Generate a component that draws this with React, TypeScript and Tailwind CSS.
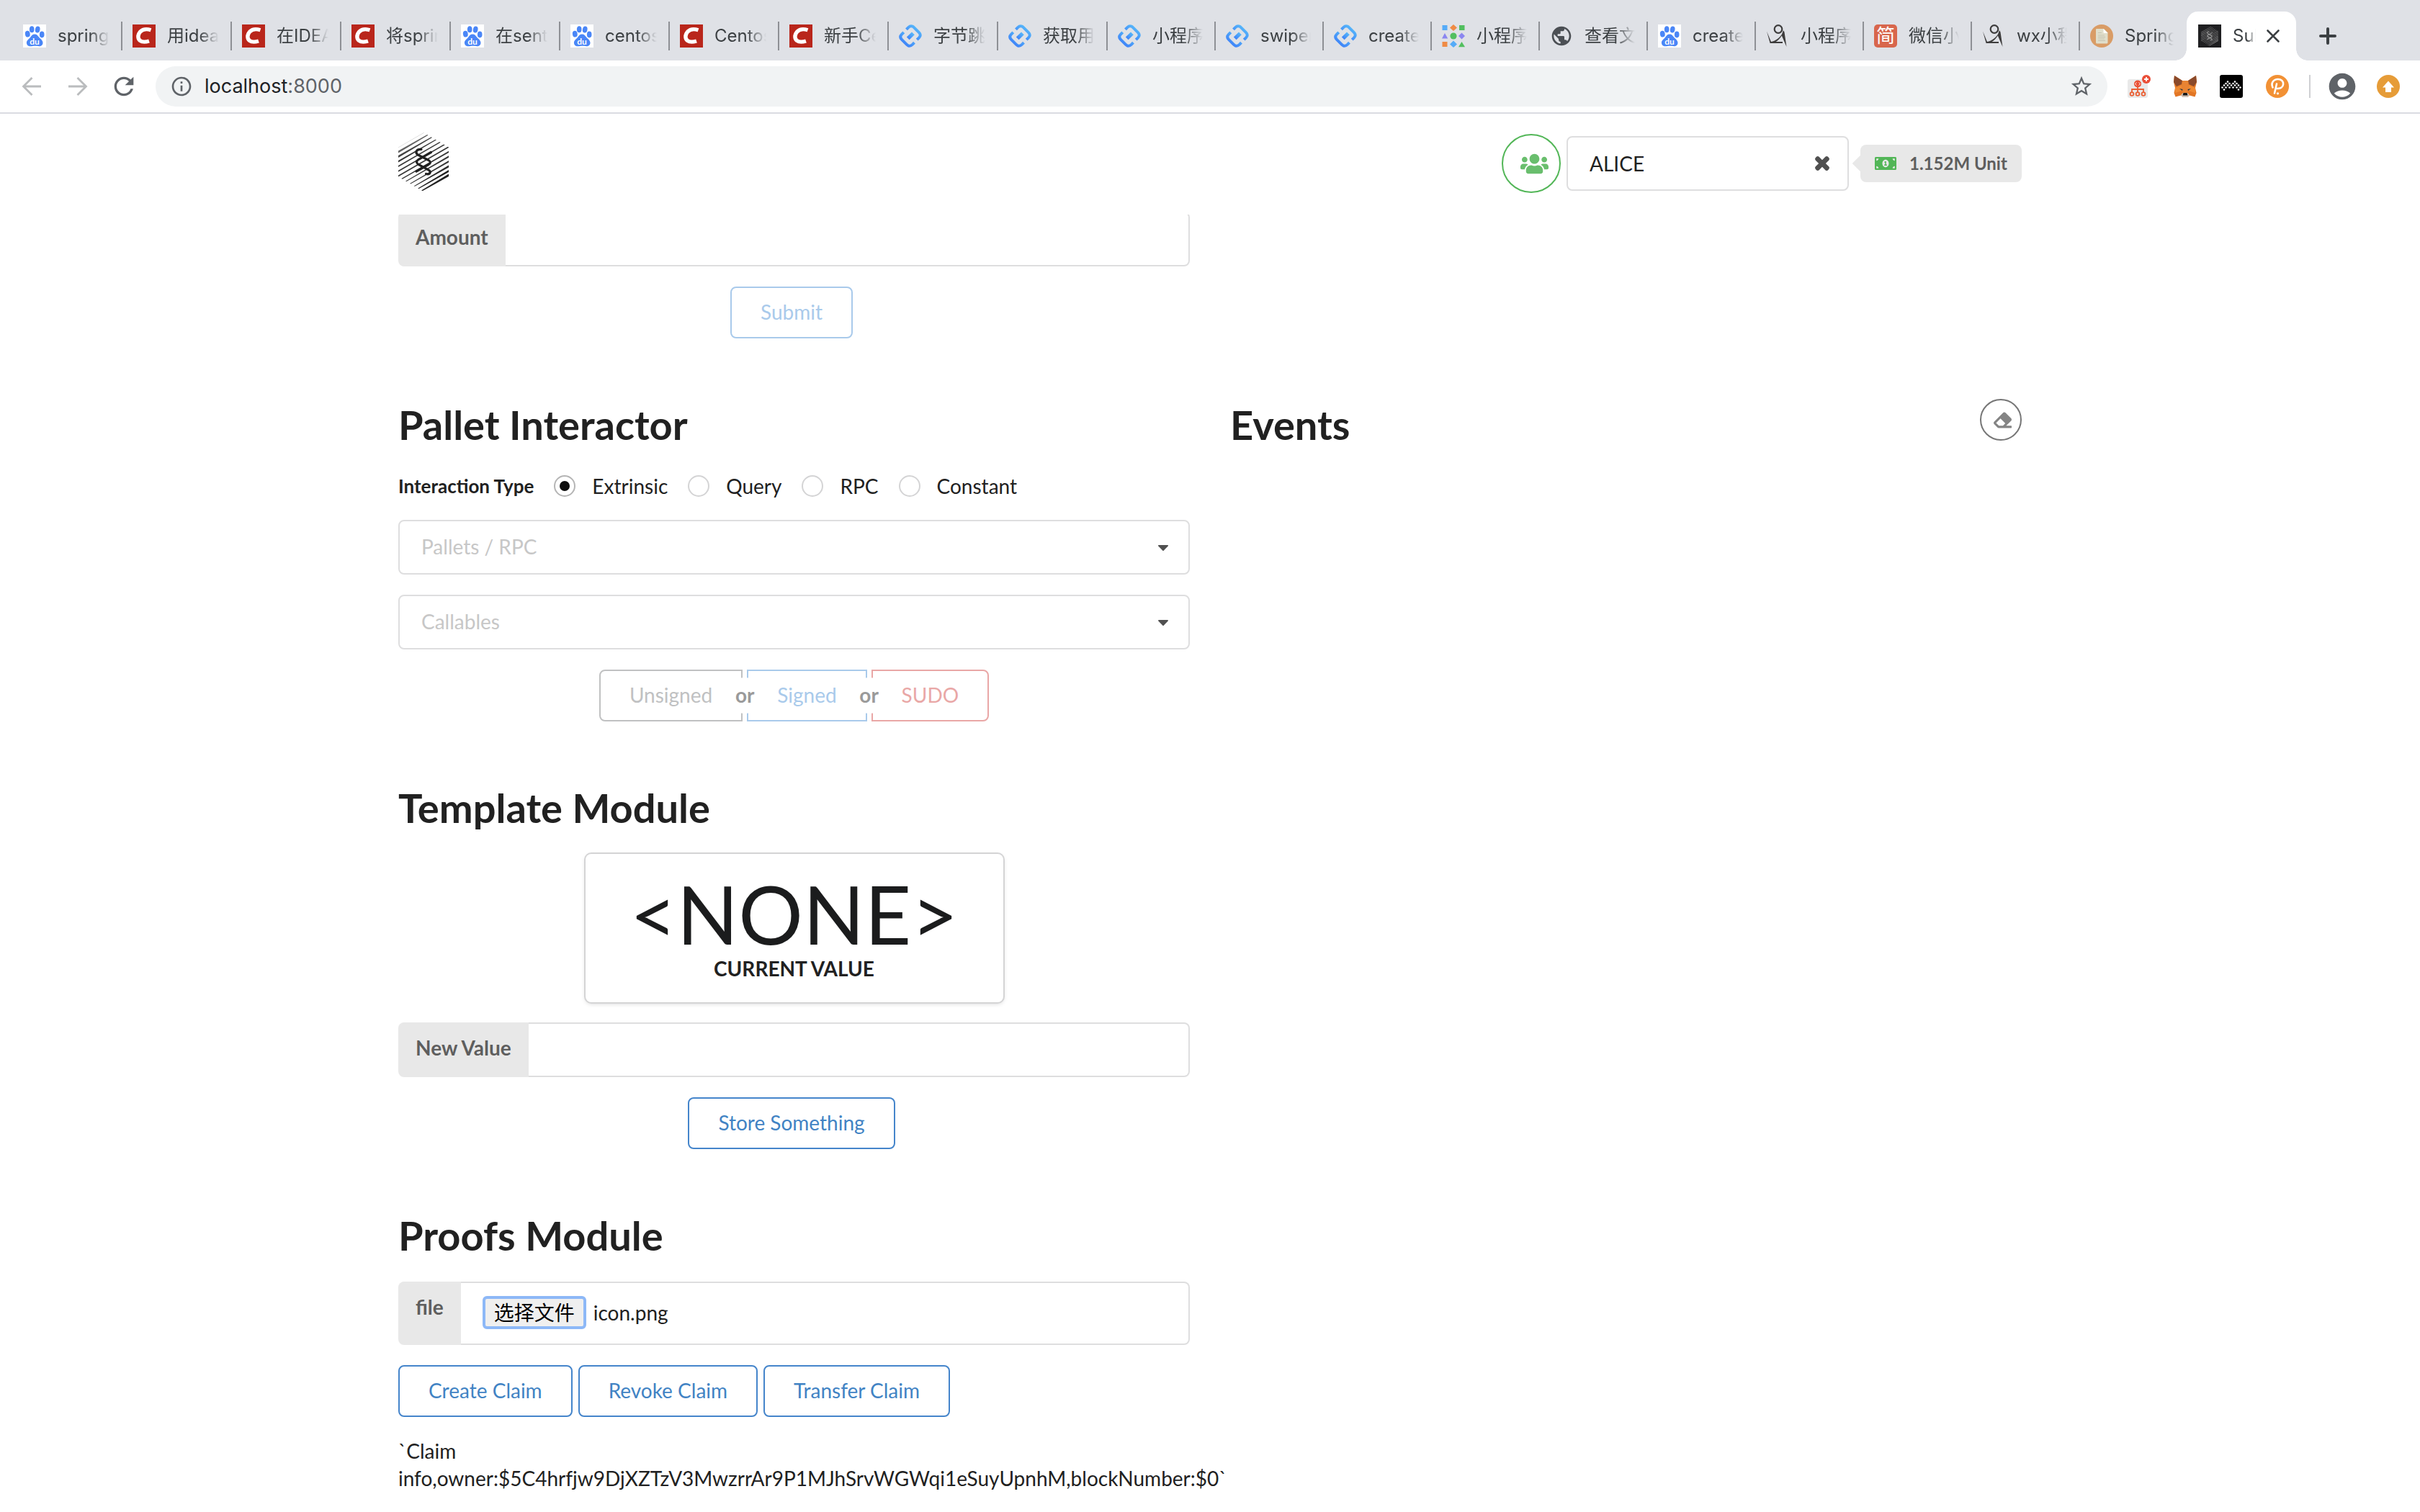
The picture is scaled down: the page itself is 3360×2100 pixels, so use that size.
import type { ReactNode } from "react";
import {
  FaCaretDown,
  FaEraser,
  FaMoneyBillAlt,
  FaTimes,
  FaUsers,
} from "react-icons/fa";
import {
  MdAccountCircle,
  MdInfoOutline,
  MdPublic,
  MdRefresh,
  MdStarBorder,
} from "react-icons/md";

/* ---------- favicons ---------- */

function BaiduIcon() {
  return (
    <svg viewBox="0 0 32 32" className="size-8 shrink-0">
      <rect width="32" height="32" fill="#fff" />
      <g fill="#4a86f7">
        <ellipse cx="6.3" cy="13.2" rx="3.4" ry="4.4" transform="rotate(-8 6.3 13.2)" />
        <ellipse cx="12.2" cy="6.8" rx="3.3" ry="4.5" />
        <ellipse cx="20.2" cy="7" rx="3.3" ry="4.5" transform="rotate(10 20.2 7)" />
        <ellipse cx="26.2" cy="14" rx="3.3" ry="4.4" />
        <path d="M16.2 13.6c3 0 4.200 2.200 6 4.200 2.200 2.400 5.300 4.400 5.300 7.600 0 3-2.200 4.800-5.100 4.800-2.300 0-3.700-.4-6-.4s-4 .5-6.300.5c-3 0-5.200-2-5.200-5 0-3.200 3-5 5-7.400 1.800-2.200 3.300-4.300 6.300-4.300z" />
      </g>
      <text x="16" y="28" textAnchor="middle" fontFamily="Lato, sans-serif" fontWeight="700" fontSize="12" fill="#fff">
        du
      </text>
    </svg>
  );
}

function CIcon() {
  return (
    <svg viewBox="0 0 32 32" className="size-8 shrink-0">
      <rect width="32" height="32" fill="#b9261b" />
      <path
        d="M25.500 7.800C20 6 14 6.600 10.600 10.200c-3.600 4-3.600 9.600-.2 12.200 3 2.200 8.200 2 12.600.6"
        fill="none"
        stroke="#fff"
        strokeWidth="5.4"
      />
    </svg>
  );
}

function LinkIcon() {
  return (
    <svg viewBox="0 0 32 32" className="size-8 shrink-0">
      <defs>
        <linearGradient id="tt" x1="1" y1="0" x2="0.200" y2="1">
          <stop offset="0" stopColor="#5cc4fa" />
          <stop offset="1" stopColor="#3b7cf8" />
        </linearGradient>
      </defs>
      <g fill="none" stroke="url(#tt)" strokeWidth="4">
        <path d="M10.500 6.800l2.700-2.700q2.800-2.600 5.800-1.400 1 .4 2 1.400l7 7q3.600 3.600 0 7.200l-2.800 2.800" />
        <path d="M21.500 25.200l-2.700 2.700q-2.800 2.600-5.800 1.400-1-.4-2-1.400l-7-7q-3.600-3.600 0-7.200l2.800-2.800" />
      </g>
      <path d="M10.800 17.500l7.200-7 3.800 3.800-7.200 7z" fill="url(#tt)" />
    </svg>
  );
}

function ShapesIcon() {
  return (
    <svg viewBox="0 0 32 32" className="size-8 shrink-0">
      <rect x="0.500" y="1" width="7" height="7" fill="#55abf8" />
      <path d="M16 0l5 4.500-5 4.500-5-4.500z" fill="#ef8b45" />
      <rect x="24" y="1" width="7.500" height="7" fill="#52bf5f" />
      <path d="M4 12l4.200 7.500H0z" fill="#8b86f0" />
      <circle cx="16" cy="16" r="4.600" fill="#52bf5f" />
      <path d="M27.500 11.500l4.500 4.500-4.500 4.500-4.500-4.500z" fill="#8b86f0" />
      <rect x="0.500" y="24" width="7" height="7" fill="#ef8b45" />
      <path d="M16 22.500l5 5-5 4.500-5-4.500z" fill="#55abf8" />
      <path d="M27.500 24l4.500 7.300h-9z" fill="#52bf5f" />
    </svg>
  );
}

function FigureIcon() {
  return (
    <svg viewBox="0 0 32 32" className="size-8 shrink-0">
      <circle cx="17" cy="6.500" r="5.300" fill="none" stroke="#3d3c3c" strokeWidth="2.200" />
      <path
        d="M1 9.500l6 14.600c6-1.200 12-5.600 15-10.600l2-5.500 1.500 2.500 3 20.500-6.700-15.500c-3.200 5.500-8 9.500-14 10.500H5.600z"
        fill="#3d3c3c"
      />
      <path d="M6 25h17" fill="none" stroke="#3d3c3c" strokeWidth="2" />
    </svg>
  );
}

function JianIcon() {
  return (
    <span className="flex size-8 shrink-0 items-center justify-center rounded-[5px] bg-[#d8664c] text-[26px] leading-8 text-white">
      简
    </span>
  );
}

function PaperIcon() {
  return (
    <svg viewBox="0 0 32 32" className="size-8 shrink-0">
      <circle cx="16" cy="16" r="16" fill="#d99c66" />
      <path d="M9 6h10l5.500 5.500V25q0 1.500-1.500 1.500H9.500Q8 26.500 8 25V7q0-1 1-1z" fill="#e0decb" />
      <path d="M18.500 6l6 6h-5q-1 0-1-1z" fill="#fff" />
      <path d="M11 11.500h5M11 15h9M11 17.500h10M11 20h9M11 22.500h10" stroke="#c5c3b2" strokeWidth="1.200" />
    </svg>
  );
}

const LOGO_LINES = [
  [20.8, 0.5, 0.5, 0.35],
  [27, 3, 0.5, 0.7],
  [33.500, 3, 0.7, 0.85],
  [40.300, 2.500, 1, 0.9],
  [47, 2.200, 1.500, 0.9],
  [53.800, 2, 1.800, 0.9],
  [60.500, 1.800, 2, 0.9],
  [67.300, 1.400, 2.200, 0.9],
  [74, 1, 2.400, 0.9],
  [80.800, 0.7, 2.600, 0.9],
  [87.500, 0.2, 3, 0.95],
  [94, 0, 3.200, 1],
  [99.800, 0, 3.600, 1],
];

function HexLogo({ ink, className }: { ink: string; className: string }) {
  return (
    <svg viewBox="0 0 70 82" className={className} fill="none">
      <clipPath id={"hex" + ink.slice(1)}>
        <path d="M35 0l35 20.500v41L35 82 0 61.500v-41z" />
      </clipPath>
      <g clipPath={`url(#hex${ink.slice(1)})`} fill={ink}>
        {LOGO_LINES.map(([y, left, right, alpha]) => (
          <path
            key={y}
            opacity={alpha}
            d={`M0 ${y - left / 2}L70 ${y - 40.5 - right / 2}V${y - 40.5 + right / 2}L0 ${y + left / 2}z`}
          />
        ))}
      </g>
      <g stroke={ink} strokeWidth="3.200" strokeLinecap="round">
        <path d="M32 23.500C25 23 23 27.500 27 31l15 7.500q5 3 0 6L25 54" />
        <path d="M45.500 27.500L28 37.500q-5 3.500 0 7L42 52q4 3 1.500 5-2 1.500-5 .5" />
      </g>
    </svg>
  );
}

/* ---------- browser chrome ---------- */

type Tab = { title: string; icon: ReactNode; wide?: boolean };

const TABS: Tab[] = [
  { title: "spring", icon: <BaiduIcon />, wide: true },
  { title: "用idea", icon: <CIcon />, wide: true },
  { title: "在IDEA", icon: <CIcon />, wide: true },
  { title: "将spring", icon: <CIcon />, wide: true },
  { title: "在sent", icon: <BaiduIcon />, wide: true },
  { title: "centos", icon: <BaiduIcon />, wide: true },
  { title: "Centos", icon: <CIcon />, wide: true },
  { title: "新手Ce", icon: <CIcon />, wide: true },
  { title: "字节跳", icon: <LinkIcon />, wide: true },
  { title: "获取用", icon: <LinkIcon />, wide: true },
  { title: "小程序", icon: <LinkIcon /> },
  { title: "swiper", icon: <LinkIcon /> },
  { title: "create", icon: <LinkIcon /> },
  { title: "小程序", icon: <ShapesIcon /> },
  { title: "查看文", icon: <MdPublic className="size-8 shrink-0 text-[#4b4f54]" /> },
  { title: "create", icon: <BaiduIcon /> },
  { title: "小程序", icon: <FigureIcon /> },
  { title: "微信小", icon: <JianIcon /> },
  { title: "wx小程", icon: <FigureIcon /> },
  { title: "Spring", icon: <PaperIcon /> },
];

function TabStrip() {
  return (
    <div className="flex h-[84px] items-end bg-[#dfe1e6] pl-[18px] text-[24px] text-[#3c4043]">
      {TABS.map((tab, i) => {
        const last = i === TABS.length - 1;
        return (
          <button
            key={i}
            type="button"
            className={
              "flex h-[68px] min-w-0 items-center pl-[14px] " +
              (tab.wide ? "w-[152px]" : last ? "w-[148px]" : "w-[150px]")
            }
          >
            {tab.icon}
            <span className="ml-4 min-w-0 flex-1 overflow-hidden text-left whitespace-nowrap [mask-image:linear-gradient(to_right,black_62%,transparent)]">
              {tab.title}
            </span>
            <span className={"ml-4 h-10 w-[2px] shrink-0 " + (last ? "" : "bg-[#8e9095]")} />
          </button>
        );
      })}
      <div className="relative flex h-[68px] w-[152px] items-center rounded-t-2xl bg-white pl-4">
        <span className="absolute bottom-0 -left-4 size-4 bg-[radial-gradient(circle_at_0_0,transparent_15.5px,white_16px)]" />
        <span className="absolute -right-4 bottom-0 size-4 bg-[radial-gradient(circle_at_100%_0,transparent_15.5px,white_16px)]" />
        <span className="flex size-8 shrink-0 items-center justify-center bg-[#1f1f21]">
          <HexLogo ink="#a0a0a0" className="h-7 w-6" />
        </span>
        <span className="ml-4 w-8 overflow-hidden whitespace-nowrap [mask-image:linear-gradient(to_right,black_62%,transparent)]">
          Substrate
        </span>
        <button type="button" aria-label="Close tab" className="ml-[14px]">
          <svg viewBox="0 0 20 20" className="size-5" stroke="#3c4043" strokeWidth="2.600" strokeLinecap="round">
            <path d="M2.500 2.500l15 15M17.500 2.500l-15 15" />
          </svg>
        </button>
      </div>
      <button type="button" aria-label="New tab" className="ml-8 flex h-[68px] items-center">
        <svg viewBox="0 0 24 24" className="size-6" stroke="#3c4043" strokeWidth="4" strokeLinecap="round">
          <path d="M12 2v20M2 12h20" />
        </svg>
      </button>
    </div>
  );
}

function Arrow({ back }: { back?: boolean }) {
  return (
    <svg
      viewBox="0 0 28 28"
      className={"size-7 " + (back ? "" : "rotate-180")}
      fill="none"
      stroke="#babcbe"
      strokeWidth="2.800"
    >
      <path d="M27 14H3M14.500 2L2.500 14l12 12" />
    </svg>
  );
}

function NodesIcon() {
  return (
    <svg viewBox="0 0 32 32" className="size-8">
      <rect x="0" y="6" width="28" height="26" rx="3" fill="#e9e9e9" />
      <circle cx="14" cy="12.500" r="5" fill="#ea5136" />
      <path d="M12.500 10.500l-2 2 2 2M15.500 10.500l2 2-2 2" fill="none" stroke="#fff" strokeWidth="1" />
      <g fill="none" stroke="#ea6035" strokeWidth="1.800">
        <path d="M14 17v7M6 24v-4h16v4" />
        <circle cx="6" cy="26.500" r="2.400" />
        <circle cx="14" cy="26.500" r="2.400" />
        <circle cx="22" cy="26.500" r="2.400" />
      </g>
      <circle cx="26" cy="6" r="6" fill="#ea4f38" />
      <path d="M26 3v6M23 6h6" stroke="#fff" strokeWidth="1.800" />
    </svg>
  );
}

function FoxIcon() {
  return (
    <svg viewBox="0 0 32 32" className="size-8">
      <path d="M1 1l11 7h8l11-7 1 9-2 8 1.500 7-2 5.500-7.500-2L19 31h-6l-3-2.500-7.500 2L.5 25 2 18 0 10z" fill="#e27625" />
      <path d="M1 1l11 7-1 5-7 3-4-6zM31 1L20 8l1 5 7 3 4-6z" fill="#8a4a2b" />
      <path d="M2 18l9-4 1 8-10 3zM30 18l-9-4-1 8 10 3z" fill="#ee8a33" />
      <path d="M12 8h8l1 10-2 8h-6l-2-8z" fill="#e88332" />
      <path d="M8 19l4.500 1-.5 2zM24 19l-4.500 1 .5 2z" fill="#233447" />
      <path d="M10 28l3-3h6l3 3-3 3h-6z" fill="#cfc3bb" />
      <path d="M13.500 25h5l1 3.500h-7z" fill="#161616" />
    </svg>
  );
}

const DOTS = [
  [11, 9.500], [21, 9.500], [8.500, 12], [13.500, 12], [18.500, 12], [23.500, 12],
  [6, 14.500], [11, 14.500], [16, 14.500], [21, 14.500], [26, 14.500],
  [3.500, 17.500], [8.500, 17.500], [13.500, 17.500], [18.500, 17.500], [23.500, 17.500],
  [28.500, 17.500], [6, 20.500], [26, 20.500],
];

function DotsIcon() {
  return (
    <svg viewBox="0 0 32 32" className="size-8">
      <rect width="32" height="32" rx="3" fill="#000" />
      {DOTS.map(([x, y]) => (
        <circle key={`${x}-${y}`} cx={x} cy={y} r="1.300" fill="#fff" />
      ))}
    </svg>
  );
}

function PIcon() {
  return (
    <svg viewBox="0 0 32 32" className="size-8">
      <circle cx="16" cy="16" r="16" fill="#f29135" />
      <path
        d="M9.500 17.500C6.500 11 11 6 16.800 6c4.700 0 7.700 3 7.300 7-.4 4-4 6.300-8.600 6M15 12.500l-3 13"
        fill="none"
        stroke="#fff"
        strokeWidth="2.600"
        strokeLinecap="round"
      />
      <circle cx="16.500" cy="25.800" r="1.600" fill="#fff" />
    </svg>
  );
}

function UpIcon() {
  return (
    <svg viewBox="0 0 32 32" className="size-8">
      <circle cx="16" cy="16" r="16" fill="#e69c38" />
      <path d="M16 8.500l8 9h-4V24h-8v-6.500H8z" fill="#fff" />
    </svg>
  );
}

function Toolbar() {
  return (
    <div className="flex h-[74px] items-center border-b-2 border-[#dadbe1] bg-white pr-7 pl-[30px]">
      <button type="button" aria-label="Back">
        <Arrow back />
      </button>
      <button type="button" aria-label="Forward" className="ml-9">
        <Arrow />
      </button>
      <button type="button" aria-label="Reload" className="ml-[30px]">
        <MdRefresh className="size-10 text-[#5f6368]" />
      </button>
      <div className="ml-[24px] flex h-14 flex-1 items-center rounded-full bg-[#f1f3f4] pr-[19px] pl-5">
        <MdInfoOutline className="size-8 shrink-0 text-[#5f6368]" />
        <div className="ml-4 flex-1 text-[27px] text-[#5f6368]">
          <span className="text-[#202124]">localhost</span>:8000
        </div>
        <button type="button" aria-label="Bookmark">
          <MdStarBorder className="size-[34px] text-[#5f6368]" />
        </button>
      </div>
      <div className="ml-7 flex items-center gap-8">
        <NodesIcon />
        <FoxIcon />
        <DotsIcon />
        <PIcon />
      </div>
      <span className="ml-7 h-8 w-[2px] bg-[#cfd0d3]" />
      <MdAccountCircle className="ml-[22px] size-[44px] text-[#5f6368]" />
      <span className="ml-[26px]">
        <UpIcon />
      </span>
    </div>
  );
}

/* ---------- page ---------- */

function Header() {
  return (
    <header className="relative z-10 bg-white">
      <div className="mx-auto flex h-[140px] w-full max-w-[2254px] items-center pb-[2px]">
        <HexLogo ink="#212121" className="mb-1 h-[82px] w-[70px]" />
        <button
          type="button"
          aria-label="Accounts"
          className="ml-auto flex size-[82px] items-center justify-center rounded-full border-2 border-[#52b657] pl-2 text-[#69be6d]"
        >
          <FaUsers className="size-[39px]" />
        </button>
        <div className="relative ml-2 h-[76px] w-[392px]">
          <select
            aria-label="Account"
            className="size-full appearance-none rounded-lg border-2 border-[#dededf] bg-white px-[30px] text-[28px] text-[#212121]"
          >
            <option>ALICE</option>
          </select>
          <button
            type="button"
            aria-label="Clear account"
            className="absolute top-0 right-[24px] flex h-full items-center text-[#505050]"
          >
            <FaTimes className="size-[26px]" stroke="currentColor" strokeWidth="40" />
          </button>
        </div>
        <div className="relative ml-4 flex h-[52px] w-[224px] items-center rounded-lg bg-[#e8e8e8] pl-5">
          <span className="absolute top-1/2 left-0 size-4 -translate-x-1/2 -translate-y-1/2 rotate-45 bg-[#e8e8e8]" />
          <FaMoneyBillAlt className="size-[30px] shrink-0 text-[#52b657]" />
          <span className="ml-[18px] text-[24px] font-bold whitespace-nowrap text-[#5e5e5e]">
            1.152M Unit
          </span>
        </div>
      </div>
    </header>
  );
}

function OutlineButton({ children, disabled }: { children: ReactNode; disabled?: boolean }) {
  return (
    <button
      type="button"
      disabled={disabled}
      className={
        "rounded-lg border-2 px-10 pt-[19px] pb-[21px] text-[28px] leading-7 whitespace-nowrap " +
        (disabled ? "border-[#a9caeb] text-[#a9caeb]" : "border-[#4585cb] text-[#4183c4]")
      }
    >
      {children}
    </button>
  );
}

function Field({ id, label }: { id: string; label: string }) {
  return (
    <div className="flex h-[76px]">
      <label
        htmlFor={id}
        className="rounded-l-lg bg-[#e8e8e8] px-6 pt-[21px] text-[28px] leading-7 font-bold whitespace-nowrap text-[#5e5e5e]"
      >
        {label}
      </label>
      <input
        id={id}
        type="text"
        className="min-w-0 flex-1 rounded-r-lg border-2 border-l-0 border-[#dededf] px-7 text-[28px] outline-none"
      />
    </div>
  );
}

function Title({ children }: { children: ReactNode }) {
  return <h1 className="text-[56px] leading-[72px] font-bold text-[#212121]">{children}</h1>;
}

function Dropdown({ label }: { label: string }) {
  return (
    <div className="relative h-[76px]">
      <select
        aria-label={label}
        className="size-full appearance-none rounded-lg border-2 border-[#dededf] bg-white px-[30px] pb-[2px] text-[28px] text-[#c7c7c7]"
      >
        <option>{label}</option>
      </select>
      <FaCaretDown className="pointer-events-none absolute top-1/2 right-[25px] size-6 -translate-y-1/2 text-[#505050]" />
    </div>
  );
}

function Or() {
  return (
    <span className="relative z-10 -mx-[22px] flex size-[50px] items-center justify-center rounded-full bg-white pb-[2px] text-[28px] leading-7 font-bold text-[#9a9a9a]">
      or
    </span>
  );
}

function Interactor() {
  return (
    <section className="flex flex-col gap-7">
      <Title>Pallet Interactor</Title>
      <fieldset className="-mb-[2px] flex h-[42px] items-center text-[28px]">
        <span className="pb-[2px] text-[26px] font-bold">Interaction Type</span>
        <span className="flex gap-7 pb-[2px] pl-7">
          {["Extrinsic", "Query", "RPC", "Constant"].map((type, i) => (
            <label key={type} className="flex items-center gap-[23px]">
              <input
                type="radio"
                name="interaction"
                defaultChecked={i === 0}
                className="grid size-[30px] appearance-none place-items-center rounded-full border-2 border-[#d4d4d5] bg-white checked:border-[#b5b5b5] checked:before:size-[14px] checked:before:rounded-full checked:before:bg-[#0d0d0d] checked:before:content-['']"
              />
              {type}
            </label>
          ))}
        </span>
      </fieldset>
      <Dropdown label="Pallets / RPC" />
      <Dropdown label="Callables" />
      <div className="flex h-[72px] items-center justify-center text-[28px] leading-7">
        <button
          type="button"
          disabled
          className="h-full rounded-l-lg border-2 border-[#c0c1c2] px-10 pb-[2px] text-[#c0c1c2]"
        >
          Unsigned
        </button>
        <Or />
        <button
          type="button"
          disabled
          className="h-full border-2 border-[#a9caeb] px-10 pb-[2px] text-[#a9caeb]"
        >
          Signed
        </button>
        <Or />
        <button
          type="button"
          disabled
          className="h-full rounded-r-lg border-2 border-[#e9a7a6] px-10 pb-[2px] text-[#e9a7a6]"
        >
          SUDO
        </button>
      </div>
    </section>
  );
}

function TemplateModule() {
  return (
    <section className="flex flex-col gap-7">
      <Title>Template Module</Title>
      <div className="mx-auto w-[580px] rounded-lg bg-white py-[27px] text-center shadow-[0_2px_6px_0_#d4d4d5,0_0_0_2px_#d4d4d5]">
        <div className="text-[112px] leading-[112px] text-[#1b1c1d]">&lt;NONE&gt;</div>
        <div className="text-[28px] leading-10 font-bold">CURRENT VALUE</div>
      </div>
      <Field id="new-value" label="New Value" />
      <div className="flex justify-center pr-[7px]">
        <OutlineButton>Store Something</OutlineButton>
      </div>
    </section>
  );
}

function ProofsModule() {
  return (
    <section className="flex flex-col gap-7">
      <Title>Proofs Module</Title>
      <div className="flex h-[88px]">
        <label
          htmlFor="file"
          className="rounded-l-lg bg-[#e8e8e8] px-6 pt-[21px] text-[28px] leading-7 font-bold text-[#5e5e5e]"
        >
          file
        </label>
        <div className="flex flex-1 items-center rounded-r-lg border-2 border-l-0 border-[#dededf] pb-[2px] pl-[30px] text-[28px]">
          <input id="file" type="file" className="sr-only" />
          <label
            htmlFor="file"
            className="flex h-[46px] items-center rounded-md border-4 border-[#8db8f7] bg-[#efefef] px-3 leading-9 text-black"
          >
            选择文件
          </label>
          <span className="ml-[10px]">icon.png</span>
        </div>
      </div>
      <div className="flex gap-2">
        <OutlineButton>Create Claim</OutlineButton>
        <OutlineButton>Revoke Claim</OutlineButton>
        <OutlineButton>Transfer Claim</OutlineButton>
      </div>
      <div className="text-[28px] leading-[38px] [font-variant-ligatures:none]">
        `Claim info,owner:$5C4hrfjw9DjXZTzV3MwzrrAr9P1MJhSrvWGWqi1eSuyUpnhM,blockNumber:$0`
      </div>
    </section>
  );
}

function Events() {
  return (
    <section className="flex items-start justify-between">
      <Title>Events</Title>
      <button
        type="button"
        aria-label="Clear events"
        className="flex size-[58px] items-center justify-center rounded-full border-2 border-[#767676] text-[#848484]"
      >
        <FaEraser className="ml-1 size-[25px]" />
      </button>
    </section>
  );
}

export default function App() {
  return (
    <div className="min-h-screen overflow-hidden bg-white">
      <div className="font-['Inter','Noto_Sans_CJK_SC',sans-serif]">
        <TabStrip />
        <Toolbar />
      </div>
      <div className="font-['Lato','Noto_Sans_CJK_SC',sans-serif] text-[#212121]">
        <Header />
        <main className="mx-auto -mt-1 flex w-full max-w-[2254px] flex-col gap-[84px]">
          <div className="grid grid-cols-2 gap-14">
            <section className="flex flex-col gap-7">
              <Field id="amount" label="Amount" />
              <div className="flex justify-center pr-[7px]">
                <OutlineButton disabled>Submit</OutlineButton>
              </div>
            </section>
          </div>
          <div className="grid grid-cols-2 gap-14">
            <Interactor />
            <Events />
          </div>
          <div className="grid grid-cols-2 gap-14">
            <TemplateModule />
          </div>
          <div className="grid grid-cols-2 gap-14">
            <ProofsModule />
          </div>
        </main>
      </div>
    </div>
  );
}
